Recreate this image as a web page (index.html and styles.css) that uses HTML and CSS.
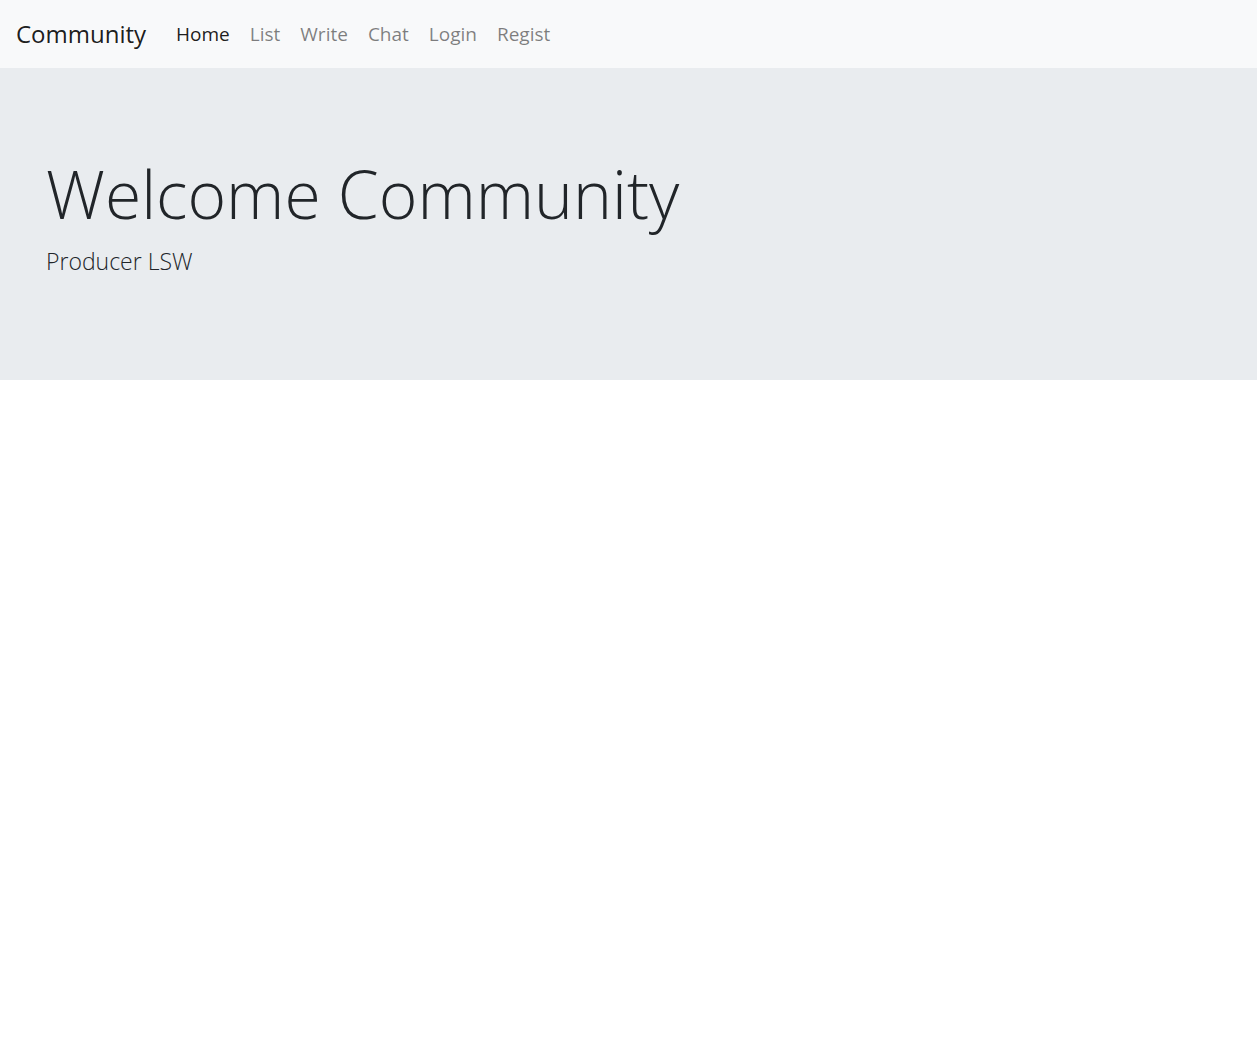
FILE: index.html
```html
<!DOCTYPE html>
<html lang="en">
<head>
<meta charset="utf-8">
<title>Community</title>
<link rel="stylesheet" href="styles.css">
</head>
<body>
<nav class="navbar">
  <a class="brand" href="#">Community</a>
  <ul class="nav">
    <li><a class="nav-link active" href="#">Home</a></li>
    <li><a class="nav-link" href="#">List</a></li>
    <li><a class="nav-link" href="#">Write</a></li>
    <li><a class="nav-link" href="#">Chat</a></li>
    <li><a class="nav-link" href="#">Login</a></li>
    <li><a class="nav-link" href="#">Regist</a></li>
  </ul>
</nav>
<section class="jumbotron">
  <h1 class="display">Welcome Community</h1>
  <p class="lead">Producer LSW</p>
</section>
</body>
</html>
```
FILE: styles.css
```css
html, body {
  margin: 0;
  padding: 0;
  background: #fff;
  font-family: "Open Sans", "Noto Sans", sans-serif;
  color: #212529;
}
a { text-decoration: none; }

.navbar {
  display: flex;
  align-items: center;
  height: 68px;
  padding: 0 16px;
  background: #f8f9fa;
  box-sizing: border-box;
}
.brand {
  font-size: 24px;
  color: rgba(0,0,0,.9);
  margin-right: 20px;
  line-height: 1.5;
}
.nav {
  display: flex;
  list-style: none;
  margin: 0;
  padding: 0;
}
.nav-link {
  display: block;
  padding: 0 10px;
  font-size: 19px;
  line-height: 1.5;
  color: rgba(0,0,0,.5);
}
.nav-link.active {
  color: rgba(0,0,0,.9);
}

.jumbotron {
  background: #e9ecef;
  height: 312px;
  box-sizing: border-box;
  padding: 86px 46px 0;
}
.display {
  margin: 0 0 11px;
  font-size: 66px;
  font-weight: 300;
  line-height: 1.2;
}
.lead {
  margin: 0;
  font-size: 23px;
  font-weight: 300;
  line-height: 1.5;
}
```
